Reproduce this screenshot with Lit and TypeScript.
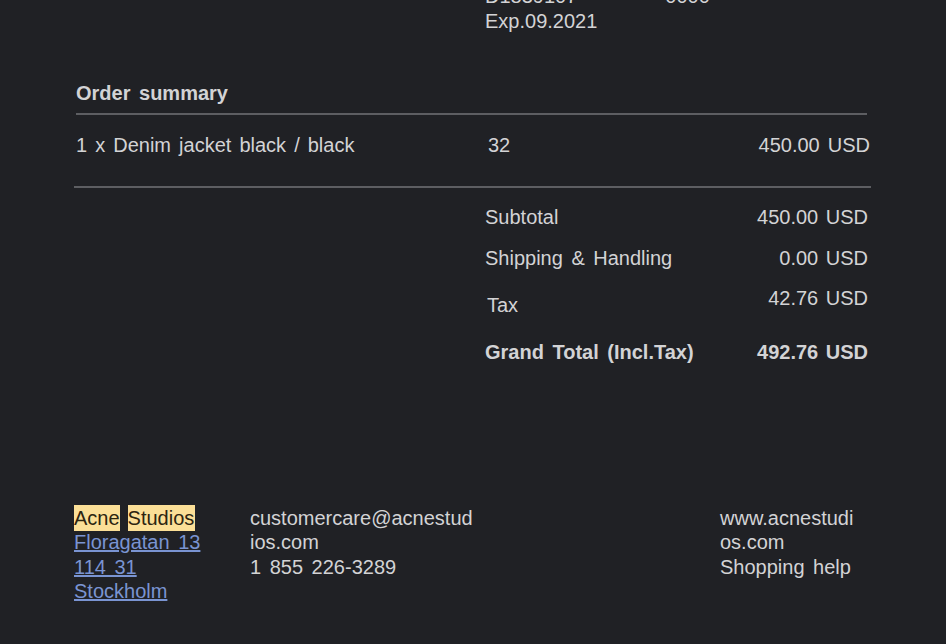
import { html, css, LitElement } from 'lit';
import { customElement } from 'lit/decorators.js';

@customElement('app-root')
export class AppRoot extends LitElement {
  static styles = css`
    :host {
      display: block;
      width: 946px;
      height: 644px;
      overflow: hidden;
      background: #202125;
      color: #d3d3d5;
      font-family: 'Liberation Sans', Arial, sans-serif;
      font-size: 20px;
      line-height: 24.5px;
      word-spacing: 3px;
    }

    .top {
      height: 33px;
      padding-left: 485px;
      display: flex;
      flex-direction: column;
      justify-content: flex-end;
      overflow: hidden;
    }

    .clipped {
      display: flex;
      gap: 88px;
    }

    .summary {
      margin: 48px 0 0 76px;
      width: 791px;
      font-weight: bold;
      padding-bottom: 7px;
      border-bottom: 2px solid #5d5e62;
    }

    .item {
      margin-left: 76px;
      width: 794px;
      padding-top: 18px;
      display: grid;
      grid-template-columns: 412px 1fr auto;
      word-spacing: 2.5px;
    }

    .rule {
      margin: 29px 0 0 74px;
      width: 797px;
      height: 2px;
      background: #5d5e62;
    }

    .totals {
      margin: 17px 0 0 485px;
      width: 383px;
      display: flex;
      flex-direction: column;
    }

    .row {
      display: flex;
      justify-content: space-between;
      height: 40.5px;
    }

    .val {
      word-spacing: 2px;
    }

    .tax {
      height: 54px;
      align-items: flex-start;
    }

    .tax span:first-child {
      margin: 7px 0 0 2px;
    }

    .grand {
      font-weight: bold;
      height: 24.5px;
    }

    .footer {
      margin: 141px 0 0 74px;
      display: grid;
      grid-template-columns: 176px 470px 136px;
    }

    .name {
      background: #fbdf97;
      color: #2c2410;
      word-spacing: normal;
      padding: 2px 0;
    }

    .gap {
      margin-left: 8px;
      padding-right: 1px;
    }

    a {
      color: #7a94d2;
      text-decoration: underline;
    }

    .col {
      display: block;
    }
  `;

  render() {
    return html`
      <div class="top">
        <div class="clipped"><span>D1839107</span><span>0000</span></div>
        <div>Exp.09.2021</div>
      </div>

      <div class="summary">Order summary</div>
      <div class="item">
        <span>1 x Denim jacket black / black</span>
        <span>32</span>
        <span>450.00 USD</span>
      </div>
      <div class="rule"></div>

      <div class="totals">
        <div class="row"><span>Subtotal</span><span class="val">450.00 USD</span></div>
        <div class="row"><span>Shipping &amp; Handling</span><span class="val">0.00 USD</span></div>
        <div class="row tax"><span>Tax</span><span class="val">42.76 USD</span></div>
        <div class="row grand"><span>Grand Total (Incl.Tax)</span><span class="val">492.76 USD</span></div>
      </div>

      <div class="footer">
        <div class="col">
          <span class="name">Acne</span><span class="name gap">Studios</span><br />
          <a href="#">Floragatan 13</a><br />
          <a href="#">114 31</a><br />
          <a href="#">Stockholm</a>
        </div>
        <div class="col">customercare@acnestud<br />ios.com<br />1 855 226-3289</div>
        <div class="col">www.acnestudi<br />os.com<br />Shopping help</div>
      </div>
    `;
  }
}
